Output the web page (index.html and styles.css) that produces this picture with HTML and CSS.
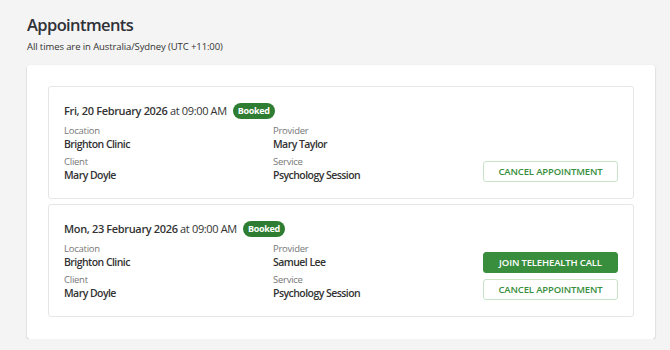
FILE: index.html
```html
<!DOCTYPE html>
<html>
<head>
<meta charset="utf-8">
<link rel="stylesheet" href="styles.css">
</head>
<body>
<div class="page">
  <h1 class="title">Appointments</h1>
  <p class="subtitle">All times are in Australia/Sydney (UTC +11:00)</p>
  <div class="panel">
    <div class="card">
      <div class="head"><span class="when"><span class="date">Fri, 20 February 2026</span> at 09:00 AM</span><span class="badge">Booked</span></div>
      <div class="body">
        <div class="info">
          <div class="field"><div class="label">Location</div><div class="value">Brighton Clinic</div></div>
          <div class="field"><div class="label">Provider</div><div class="value">Mary Taylor</div></div>
          <div class="field"><div class="label">Client</div><div class="value">Mary Doyle</div></div>
          <div class="field"><div class="label">Service</div><div class="value">Psychology Session</div></div>
        </div>
        <div class="actions">
          <button class="btn btn-outline">CANCEL APPOINTMENT</button>
        </div>
      </div>
    </div>
    <div class="card">
      <div class="head"><span class="when"><span class="date">Mon, 23 February 2026</span> at 09:00 AM</span><span class="badge">Booked</span></div>
      <div class="body">
        <div class="info">
          <div class="field"><div class="label">Location</div><div class="value">Brighton Clinic</div></div>
          <div class="field"><div class="label">Provider</div><div class="value">Samuel Lee</div></div>
          <div class="field"><div class="label">Client</div><div class="value">Mary Doyle</div></div>
          <div class="field"><div class="label">Service</div><div class="value">Psychology Session</div></div>
        </div>
        <div class="actions">
          <button class="btn btn-solid">JOIN TELEHEALTH CALL</button>
          <button class="btn btn-outline">CANCEL APPOINTMENT</button>
        </div>
      </div>
    </div>
  </div>
</div>
</body>
</html>
```
FILE: styles.css
```css
html, body {
  margin: 0;
  padding: 0;
  background: #f4f4f4;
  font-family: "Open Sans", "Noto Sans", sans-serif;
  color: #333;
}
.page {
  padding: 14px 16px 0 27px;
}
.title {
  margin: 0;
  font-size: 16.5px;
  letter-spacing: -0.6px;
  font-weight: 600;
  line-height: 22px;
  color: #2f3137;
}
.subtitle {
  margin: 4px 0 0;
  font-size: 9.5px;
  letter-spacing: -0.1px;
  line-height: 13px;
  color: #333;
}
.panel {
  margin-top: 12px;
  width: 628px;
  box-sizing: border-box;
  background: #fff;
  padding: 21px 21px 22px;
  border-radius: 3px;
  box-shadow: 0 1px 2px rgba(0,0,0,0.25);
  display: flex;
  flex-direction: column;
  gap: 5px;
}
.card {
  border: 1px solid #e6e6e6;
  border-radius: 3px;
  padding: 15px 15px 16px 15px;
}
.head {
  font-size: 11px;
  letter-spacing: -0.35px;
  line-height: 18px;
  color: #333;
  display: flex;
  align-items: center;
}
.when {
  white-space: nowrap;
}
.date {
  font-weight: 600;
}
.badge {
  margin-left: 6px;
  background: #2e7d32;
  color: #fff;
  font-size: 9px;
  letter-spacing: -0.3px;
  font-weight: 700;
  line-height: 16px;
  padding: 0 5px;
  border-radius: 8px;
}
.body {
  display: flex;
  align-items: flex-end;
  margin-top: 4px;
}
.info {
  flex: 1;
  display: grid;
  grid-template-columns: 209px 1fr;
  row-gap: 4px;
}
.label {
  font-size: 9.5px;
  letter-spacing: -0.25px;
  line-height: 13px;
  color: #777;
}
.value {
  font-size: 10.5px;
  letter-spacing: -0.55px;
  line-height: 14px;
  font-weight: 600;
  color: #333;
}
.actions {
  display: flex;
  flex-direction: column;
  gap: 6px;
}
.btn {
  width: 135px;
  height: 21px;
  box-sizing: border-box;
  border-radius: 3px;
  font-family: inherit;
  font-size: 9.5px;
  font-weight: 600;
  letter-spacing: -0.15px;
  padding: 0;
  cursor: pointer;
}
.btn-outline {
  background: #fff;
  border: 1px solid #c9e3ca;
  color: #388e3c;
}
.btn-solid {
  background: #388e3c;
  border: 1px solid #388e3c;
  color: #fff;
}
```
